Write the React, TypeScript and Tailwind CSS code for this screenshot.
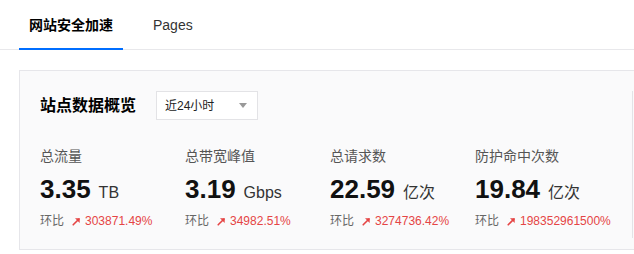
import { useState } from "react"

const font = { fontFamily: '"Liberation Sans", "Noto Sans CJK SC", sans-serif' }

type Stat = { label: string, value: string, unit: string, ratio: string }

const stats: Stat[] = [
    { label: "总流量", value: "3.35", unit: "TB", ratio: "303871.49%" },
    { label: "总带宽峰值", value: "3.19", unit: "Gbps", ratio: "34982.51%" },
    { label: "总请求数", value: "22.59", unit: "亿次", ratio: "3274736.42%" },
    { label: "防护命中次数", value: "19.84", unit: "亿次", ratio: "198352961500%" },
]

function UpArrow() {
    return (
        <svg width="9" height="9" viewBox="0 0 9 9" className="shrink-0">
            <path d="M1.2 7.8 L7 2" stroke="#e54545" strokeWidth="1.6" strokeLinecap="round" />
            <path d="M3 1.3 H7.7 V6 Z" fill="#e54545" />
        </svg>
    )
}

function StatItem(props: { stat: Stat }) {
    return (
        <div className="w-[145px] shrink-0">
            <div className="text-[14px] leading-[22px] text-[#555]">{props.stat.label}</div>
            <div className="mt-[5px] flex items-baseline whitespace-nowrap">
                <span className="text-[26px] leading-[34px] font-bold text-[#111]">{props.stat.value}</span>
                <span className="ml-2 text-[16px] text-[#333]">{props.stat.unit}</span>
            </div>
            <div className="mt-[5px] flex items-center h-[20px] text-[12px] whitespace-nowrap">
                <span className="text-[#666]">环比</span>
                <span className="ml-2 mr-1 flex items-center"><UpArrow /></span>
                <span className="text-[#e54545]">{props.stat.ratio}</span>
            </div>
        </div>
    )
}

export default function App() {
    const [tab, setTab] = useState(0)
    const tabs = ["网站安全加速", "Pages"]

    return (
        <div className="w-[634px] h-[254px] overflow-hidden bg-white" style={font}>
            <div className="flex h-[50px] pl-[19px] border-b border-[#e8e8eb]">
                {tabs.map((t, idx) => (
                    <button
                        key={t}
                        onClick={() => setTab(idx)}
                        className={
                            idx === tab
                                ? "h-[50px] px-[10px] text-[14px] font-bold text-black shadow-[inset_0_-2px_0_#006eff]"
                                : "h-[50px] ml-[20px] px-[10px] text-[14px] text-[#333]"
                        }
                    >
                        {t}
                    </button>
                ))}
            </div>

            <div className="mt-[20px] ml-[19px] w-[640px] border border-[#e6e6ea] bg-[#fafafb] pl-[20px] pt-[20px] pb-[11px]">
                <div className="w-[593px] border-r border-[#e3e3e6] pb-[7px]">
                    <div className="flex items-center h-[29px]">
                        <h2 className="text-[16px] font-bold text-black">站点数据概览</h2>
                        <div className="ml-[20px] w-[102px] h-[29px] border border-[#e3e3e6] bg-white flex items-center justify-between pl-[8px] pr-[10px]">
                            <span className="text-[12px] text-[#222]">近24小时</span>
                            <span className="w-0 h-0 border-l-[4px] border-r-[4px] border-t-[5px] border-l-transparent border-r-transparent border-t-[#999]" />
                        </div>
                    </div>
                    <div className="mt-[25px] flex">
                        {stats.map((s) => (
                            <StatItem key={s.label} stat={s} />
                        ))}
                    </div>
                </div>
            </div>
        </div>
    )
}
